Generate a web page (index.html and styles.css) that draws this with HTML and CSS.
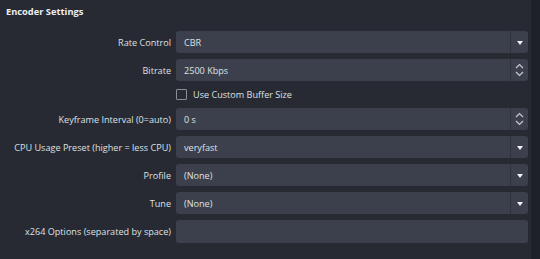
FILE: index.html
```html
<!DOCTYPE html>
<html lang="en">
<head>
  <meta charset="UTF-8" />
  <title>Encoder Settings</title>
  <link rel="stylesheet" href="styles.css">
</head>
<body>
  <div class="panel">
    <div class="group-title">Encoder Settings</div>

    <div class="form">
      <label>Rate Control</label>
      <div class="field combo"><span class="value">CBR</span><span class="drop"><i class="arrow"></i></span></div>

      <label>Bitrate</label>
      <div class="field spin"><span class="value">2500 Kbps</span>
        <span class="spin-btns">
          <svg width="9" height="6" viewBox="0 0 9 6"><path d="M1 5 L4.5 1.5 L8 5" fill="none" stroke="#c9cbd1" stroke-width="1.2"/></svg>
          <svg width="9" height="6" viewBox="0 0 9 6"><path d="M1 1 L4.5 4.5 L8 1" fill="none" stroke="#c9cbd1" stroke-width="1.2"/></svg>
        </span>
      </div>

      <span></span>
      <div class="check-row"><span class="box"></span><span>Use Custom Buffer Size</span></div>

      <label>Keyframe Interval (0=auto)</label>
      <div class="field spin"><span class="value">0 s</span>
        <span class="spin-btns">
          <svg width="9" height="6" viewBox="0 0 9 6"><path d="M1 5 L4.5 1.5 L8 5" fill="none" stroke="#c9cbd1" stroke-width="1.2"/></svg>
          <svg width="9" height="6" viewBox="0 0 9 6"><path d="M1 1 L4.5 4.5 L8 1" fill="none" stroke="#c9cbd1" stroke-width="1.2"/></svg>
        </span>
      </div>

      <label>CPU Usage Preset (higher = less CPU)</label>
      <div class="field combo"><span class="value">veryfast</span><span class="drop"><i class="arrow"></i></span></div>

      <label>Profile</label>
      <div class="field combo"><span class="value">(None)</span><span class="drop"><i class="arrow"></i></span></div>

      <label>Tune</label>
      <div class="field combo"><span class="value">(None)</span><span class="drop"><i class="arrow"></i></span></div>

      <label>x264 Options (separated by space)</label>
      <div class="field text"></div>
    </div>
  </div>
  <div class="scroll-strip"></div>
</body>
</html>
```

FILE: styles.css
```css
body { margin: 0; background: #272a33; font-family: "Open Sans", sans-serif; font-size: 9.1px; color: #dfe0e4; display: flex; height: 259px; overflow: hidden; }
.panel { flex: 1; }
.scroll-strip { width: 9px; background: #1f2128; }

.group-title { font-weight: bold; font-size: 9.3px; padding: 5px 0 0 6px; height: 20px; box-sizing: border-box; color: #eceef2; }

.form { display: grid; grid-template-columns: 171px 1fr; column-gap: 5px; row-gap: 6px; padding: 11px 3px 0 0; align-items: center; }
.form label { text-align: right; white-space: nowrap; }

.field { height: 22px; background: #3c404c; border-radius: 3px; display: flex; align-items: center; box-sizing: border-box; }
.field .value { flex: 1; padding-left: 8px; }
.field.text { height: 23px; }
.drop { width: 17px; height: 22px; border-left: 1px solid #30333d; display: flex; align-items: center; justify-content: center; }
.arrow { width: 0; height: 0; border-left: 3.5px solid transparent; border-right: 3.5px solid transparent; border-top: 4px solid #f2f3f5; margin-top: 1px; }

.spin-btns { width: 17px; height: 22px; border-left: 1px solid #30333d; display: flex; flex-direction: column; align-items: center; justify-content: center; gap: 2px; }
.spin-btns svg { display: block; }

.check-row { display: flex; align-items: center; gap: 6px; height: 15px; }
.check-row .box { width: 9px; height: 9px; border: 1px solid #8a8d96; border-radius: 1px; }
```
